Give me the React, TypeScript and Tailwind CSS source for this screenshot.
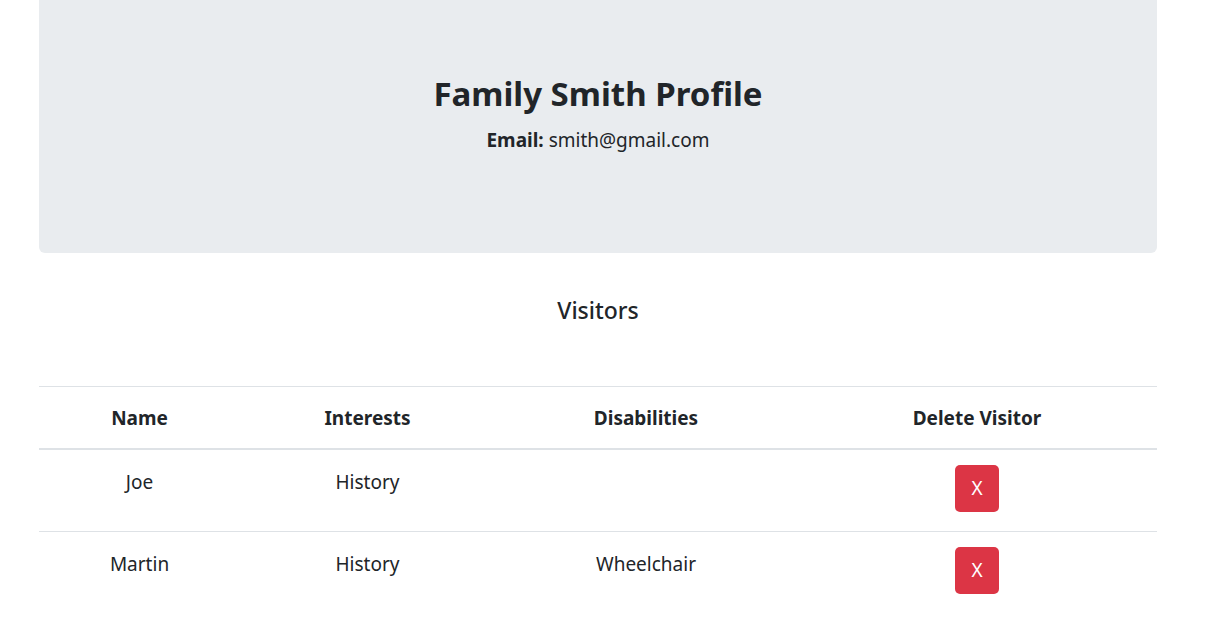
import React from "react";

const rows = [
  { name: "Joe", interests: "History", disabilities: "" },
  { name: "Martin", interests: "History", disabilities: "Wheelchair" },
];

export default function App() {
  return (
    <div
      className="min-h-[620px] bg-white text-[#212529]"
      style={{ fontFamily: '"Noto Sans", "Open Sans", sans-serif' }}
    >
      <div className="ml-[39px] w-[1118px]">
        <div className="h-[253px] rounded-b-[6px] bg-[#e9ecef] pt-[73px] text-center">
          <h1 className="text-[33px] font-bold leading-[42px]">Family Smith Profile</h1>
          <p className="mt-[10px] text-[19px] leading-[30px]">
            <span className="font-bold">Email:</span> smith@gmail.com
          </p>
        </div>
        <h4 className="mt-[42px] text-center text-[23px] font-medium leading-[30px]">Visitors</h4>
        <table className="mt-[61px] w-full table-fixed border-collapse text-center text-[19px] leading-[30px]">
          <colgroup>
            <col className="w-[201px]" />
            <col className="w-[255px]" />
            <col className="w-[302px]" />
            <col className="w-[360px]" />
          </colgroup>
          <thead>
            <tr className="border-t border-b-2 border-t-[#dee2e6] border-b-[#dee2e6]">
              <th className="h-[62px] px-[15px] pt-[2px] align-middle font-bold">Name</th>
              <th className="h-[62px] px-[15px] pt-[2px] align-middle font-bold">Interests</th>
              <th className="h-[62px] px-[15px] pt-[2px] align-middle font-bold">Disabilities</th>
              <th className="h-[62px] px-[15px] pt-[2px] align-middle font-bold">Delete Visitor</th>
            </tr>
          </thead>
          <tbody>
            {rows.map((r, i) => (
              <tr key={r.name} className={i === 0 ? "border-b border-[#dee2e6]" : ""}>
                <td className="px-[15px] pt-[17px] align-top">{r.name}</td>
                <td className="px-[15px] pt-[17px] align-top">{r.interests}</td>
                <td className="px-[15px] pt-[17px] align-top">{r.disabilities}</td>
                <td className="px-[15px] pt-[15px] pb-[19px] align-top">
                  <button className="inline-flex h-[47px] w-[44px] items-center justify-center rounded-[5px] bg-[#dc3545] text-[19px] text-white">
                    X
                  </button>
                </td>
              </tr>
            ))}
          </tbody>
        </table>
      </div>
    </div>
  );
}
